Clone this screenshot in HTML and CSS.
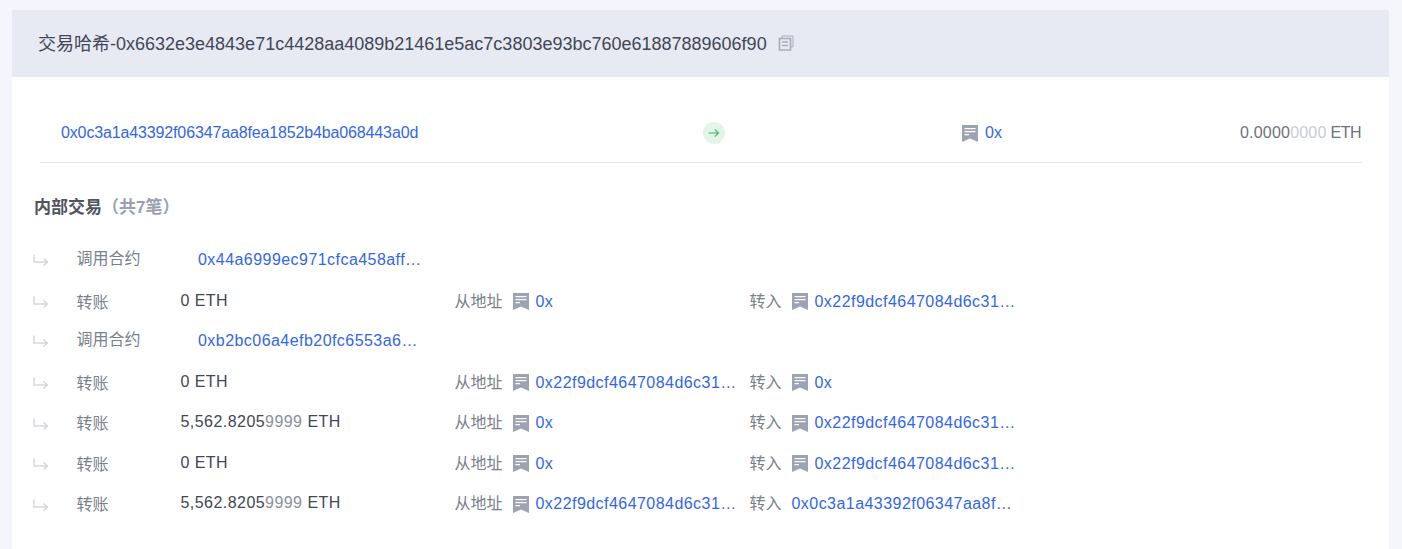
FILE: index.html
```html
<!DOCTYPE html>
<html lang="zh">
<head>
<meta charset="utf-8">
<title>交易哈希</title>
<link rel="stylesheet" href="styles.css">
</head>
<body>
<svg class="defs" width="0" height="0" aria-hidden="true">
  <symbol id="tag" viewBox="0 0 16 17">
    <path fill-rule="evenodd" d="M0 0H16V17L8 13.500 0 17ZM2.500 3V4.200H13.500V3ZM2.500 6V7.200H13.500V6ZM2.500 9V10.200H7V9Z"/>
  </symbol>
  <symbol id="ret" viewBox="0 0 16 12">
    <path d="M1 1V8.500H14M10.500 5 14.500 8.500 10.500 12" fill="none" stroke="currentColor" stroke-width="1.500"/>
  </symbol>
</svg>
<main class="card">
  <header class="head">
    <h1 class="title">交易哈希-0x6632e3e4843e71c4428aa4089b21461e5ac7c3803e93bc760e61887889606f90</h1>
    <svg class="copy" viewBox="0 0 16 16" width="16" height="16"><path d="M4 3V1H15V12H13" fill="none" stroke="currentColor"/><path d="M1.500 3.500H12.500V15H1.500Z" fill="none" stroke="currentColor" stroke-width="1.700"/><path d="M4 7H10M4 10.500H10" stroke="currentColor" stroke-width="1.300"/></svg>
  </header>
  <section class="summary">
    <a class="link from">0x0c3a1a43392f06347aa8fea1852b4ba068443a0d</a>
    <span class="go"><svg viewBox="0 0 12 12" width="12" height="12"><path d="M0.500 6H10.500M6.800 2.300 10.500 6 6.800 9.700" fill="none" stroke="currentColor" stroke-width="1.100"/></svg></span>
    <span class="to"><svg class="tag"><use href="#tag"/></svg><a class="link plain">0x</a></span>
    <span class="amount"><span class="num">0.0000<span class="fade">0000</span></span> ETH</span>
  </section>
  <h2 class="subtitle">内部交易<span class="count">（共7笔）</span></h2>
  <section class="list">
    <div class="row call">
      <svg class="ret"><use href="#ret"/></svg><span class="kind">调用合约</span>
      <a class="link target">0x44a6999ec971cfca458aff…</a>
    </div>
    <div class="row">
      <svg class="ret"><use href="#ret"/></svg><span class="kind">转账</span><span class="value">0 ETH</span>
      <span class="party"><span class="label">从地址</span><svg class="tag"><use href="#tag"/></svg><a class="link">0x</a></span>
      <span class="party"><span class="label">转入</span><svg class="tag"><use href="#tag"/></svg><a class="link">0x22f9dcf4647084d6c31…</a></span>
    </div>
    <div class="row call">
      <svg class="ret"><use href="#ret"/></svg><span class="kind">调用合约</span>
      <a class="link target">0xb2bc06a4efb20fc6553a6…</a>
    </div>
    <div class="row">
      <svg class="ret"><use href="#ret"/></svg><span class="kind">转账</span><span class="value">0 ETH</span>
      <span class="party"><span class="label">从地址</span><svg class="tag"><use href="#tag"/></svg><a class="link">0x22f9dcf4647084d6c31…</a></span>
      <span class="party"><span class="label">转入</span><svg class="tag"><use href="#tag"/></svg><a class="link">0x</a></span>
    </div>
    <div class="row">
      <svg class="ret"><use href="#ret"/></svg><span class="kind">转账</span><span class="value">5,562.8205<span class="fade-dark">9999</span> ETH</span>
      <span class="party"><span class="label">从地址</span><svg class="tag"><use href="#tag"/></svg><a class="link">0x</a></span>
      <span class="party"><span class="label">转入</span><svg class="tag"><use href="#tag"/></svg><a class="link">0x22f9dcf4647084d6c31…</a></span>
    </div>
    <div class="row">
      <svg class="ret"><use href="#ret"/></svg><span class="kind">转账</span><span class="value">0 ETH</span>
      <span class="party"><span class="label">从地址</span><svg class="tag"><use href="#tag"/></svg><a class="link">0x</a></span>
      <span class="party"><span class="label">转入</span><svg class="tag"><use href="#tag"/></svg><a class="link">0x22f9dcf4647084d6c31…</a></span>
    </div>
    <div class="row">
      <svg class="ret"><use href="#ret"/></svg><span class="kind">转账</span><span class="value">5,562.8205<span class="fade-dark">9999</span> ETH</span>
      <span class="party"><span class="label">从地址</span><svg class="tag"><use href="#tag"/></svg><a class="link">0x22f9dcf4647084d6c31…</a></span>
      <span class="party"><span class="label">转入</span><a class="link">0x0c3a1a43392f06347aa8f…</a></span>
    </div>
  </section>
</main>
</body>
</html>
```
FILE: styles.css
```css
* { box-sizing: border-box; }
html, body { height: 100%; }
body {
  margin: 0;
  padding: 10px 13px 0 12px;
  background: #f4f6fb;
  font-family: "Liberation Sans", "Noto Sans CJK SC", sans-serif;
  font-size: 16px;
  color: #414755;
  overflow: hidden;
}
.defs { position: absolute; }
.card { background: #fff; height: 539px; }
.head {
  height: 67px;
  background: #e7eaf3;
  display: flex;
  align-items: center;
  padding: 0 0 4px 26px;
  gap: 11px;
}
.title { margin: 0; font-size: 18px; font-weight: 400; color: #414755; }
.copy { color: #a9aebd; flex: none; margin-top: 2px; }
.link { color: #3366e8; white-space: nowrap; letter-spacing: 0.45px; }
.summary {
  margin: 0 27px 0 28px;
  height: 86px;
  border-bottom: 1px solid #e9ebef;
  display: flex;
  align-items: center;
  padding: 27px 1px 0 21px;
}
.from { width: 642px; flex: none; letter-spacing: -0.14px; }
.go {
  width: 22px;
  height: 22px;
  flex: none;
  border-radius: 50%;
  background: #e3f5e9;
  color: #3fb868;
  display: flex;
  align-items: center;
  justify-content: center;
}
.to { display: flex; align-items: center; gap: 7px; margin-left: 237px; }
.plain { letter-spacing: 0; }
.amount { margin-left: auto; color: #6d7280; letter-spacing: -0.5px; }
.num { letter-spacing: 0.2px; }
.fade { color: #c9ccd2; }
.fade-dark { color: #8b909c; }
.tag { width: 16px; height: 17px; fill: #9ea3b3; flex: none; }
.subtitle { margin: 34px 0 0 22px; font-size: 17px; font-weight: 700; line-height: 22px; color: #50545e; }
.count { color: #9aa0b1; }
.list { margin-top: 28.75px; padding-left: 20px; }
.row {
  height: 40.5px;
  display: grid;
  grid-template-columns: 45px 104px 274px 295px 1fr;
  align-items: start;
}
.ret { width: 16px; height: 13px; color: #d3d7e2; margin-top: 5px; margin-left: 1px; }
.row:not(.call) .ret { margin-top: 7px; }
.kind { color: #7b808c; line-height: 22px; margin-left: -0.5px; }
.row:not(.call) .kind { padding-top: 3.5px; }
.value { line-height: 22px; padding-top: 1.5px; letter-spacing: 0.45px; margin-left: -0.5px; }
.target { grid-column: 3; margin-left: 17px; line-height: 22px; padding-top: 1px; }
.party { display: flex; align-items: center; gap: 10px; line-height: 22px; padding-top: 2.5px; }
.label { color: #7b808c; margin-left: -0.5px; }
.party .tag + .link { margin-left: -3px; }
```
